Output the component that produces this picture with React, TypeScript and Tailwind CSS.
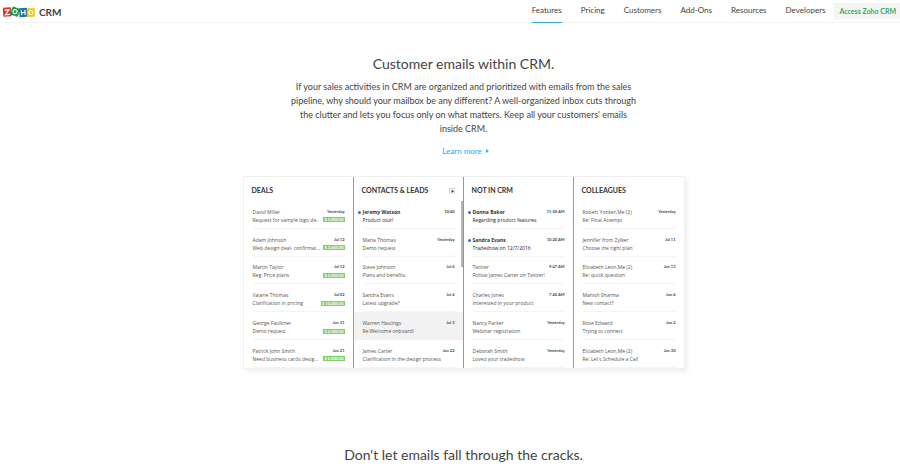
import clsx from "clsx";

type Mail = {
  name: string;
  subject: string;
  date: string;
  amount?: string;
  unread?: boolean;
  active?: boolean;
};

const navItems = ["Features", "Pricing", "Customers", "Add-Ons", "Resources", "Developers"];

const columns: { title: string; mails: Mail[] }[] = [
  {
    title: "DEALS",
    mails: [
      { name: "David Miller", subject: "Request for sample logo de..", date: "Yesterday", amount: "$ 5,000.00" },
      { name: "Adam Johnson", subject: "Web design deal- confirmat...", date: "Jul 12", amount: "$ 3,000.00" },
      { name: "Martin Taylor", subject: "Reg: Price plans", date: "Jul 12", amount: "$ 6,000.00" },
      { name: "Valarie Thomas", subject: "Clarification in pricing", date: "Jul 02", amount: "$ 10,000.00" },
      { name: "George Faulkner", subject: "Demo request", date: "Jun 31", amount: "$ 4,000.00" },
      { name: "Patrick John Smith", subject: "Need business cards desig...", date: "Jun 21", amount: "$ 6,000.00" },
    ],
  },
  {
    title: "CONTACTS & LEADS",
    mails: [
      { name: "Jeremy Watson", subject: "Product tour!", date: "10:40", unread: true },
      { name: "Maria Thomas", subject: "Demo request", date: "Yesterday" },
      { name: "Steve Johnson", subject: "Plans and benefits", date: "Jul 6" },
      { name: "Sandra Evans", subject: "Latest upgrade?", date: "Jul 4" },
      { name: "Warren Hastings", subject: "Re:Welcome onboard!", date: "Jul 3", active: true },
      { name: "James Carter", subject: "Clarification in the design process", date: "Jun 22" },
    ],
  },
  {
    title: "NOT IN CRM",
    mails: [
      { name: "Donna Baker", subject: "Regarding product features", date: "11:58 AM", unread: true },
      { name: "Sandra Evans", subject: "Tradeshow on 12/7/2016", date: "10:20 AM", unread: true },
      { name: "Twitter", subject: "Follow James Carter on Twitter!", date: "9:47 AM" },
      { name: "Charles Jones", subject: "Interested in your product", date: "7:40 AM" },
      { name: "Nancy Parker", subject: "Webinar registration", date: "Yesterday" },
      { name: "Deborah Smith", subject: "Loved your tradeshow", date: "Yesterday" },
    ],
  },
  {
    title: "COLLEAGUES",
    mails: [
      { name: "Robert Yonker,Me (2)", subject: "Re: Final Attempt", date: "Yesterday" },
      { name: "Jennifer from Zylker", subject: "Choose the right plan", date: "Jul 11" },
      { name: "Elizabeth Leon,Me (2)", subject: "Re: quick question", date: "Jun 13" },
      { name: "Manish Sharma", subject: "New contact?", date: "Jun 6" },
      { name: "Rose Edward", subject: "Trying to connect", date: "Jun 2" },
      { name: "Elizabeth Leon,Me (2)", subject: "Re: Let's Schedule a Call", date: "Jun 30" },
    ],
  },
];

function Logo() {
  return (
    <svg viewBox="0 0 32 12" className="h-3 w-8" aria-hidden="true">
      <g transform="rotate(-5 4 6)">
        <rect x="0" y="1.5" width="8.4" height="9" rx="0.6" fill="#e0352b" />
        <path d="M2 4h4.2L2.2 8.6h4.4" fill="none" stroke="#fff" strokeWidth="1.2" />
      </g>
      <g transform="rotate(20 12 5)">
        <rect x="8.4" y="1.4" width="8" height="8.4" rx="0.6" fill="#159b4a" />
        <circle cx="12.3" cy="5.6" r="2" fill="none" stroke="#fff" strokeWidth="1.1" />
      </g>
      <g transform="rotate(-4 20 6)">
        <rect x="16.2" y="2" width="8" height="9" rx="0.6" fill="#1673b9" />
        <path d="M18.4 4.2v4.8M22 4.2v4.8M18.4 6.6H22" fill="none" stroke="#fff" strokeWidth="1.2" />
      </g>
      <rect x="23.8" y="2.2" width="8" height="8.6" rx="0.6" fill="#f5c400" />
      <circle cx="27.8" cy="6.5" r="2" fill="none" stroke="#fff" strokeWidth="1.1" />
    </svg>
  );
}

function PopoutIcon() {
  return (
    <svg viewBox="0 0 6 6" className="size-[6px]" fill="none" stroke="#aaa" strokeWidth="0.5" aria-hidden="true">
      <path d="M2 5.5H.5V.5h5v5H4.6" />
      <path d="M2.6 2.2l2 1.2-1 .3-.5 1z" fill="#222" stroke="#333" />
    </svg>
  );
}

function MailRow({ mail }: { mail: Mail }) {
  return (
    <li className={clsx("relative flex-1 pr-2 pl-[9px]", mail.active && "bg-[#f2f2f2]")}>
      {mail.unread && <span className="absolute top-[10px] left-1 size-[3px] rounded-full bg-[#1f6fe5]" />}
      <div className="flex h-full flex-col justify-end border-b border-[#f4f4f4] pb-1">
        <div className="flex justify-between">
          <span className={clsx("text-[5px] leading-2", mail.unread ? "font-bold text-[#333]" : "text-[#555]")}>
            {mail.name}
          </span>
          <time className="font-['Lato'] text-[4px] leading-[7px] font-bold text-[#444]">{mail.date}</time>
        </div>
        <div className="flex items-center justify-between">
          <span className={clsx("text-[5px] leading-2 whitespace-nowrap", mail.unread ? "text-[#222]" : "text-[#555]")}>
            {mail.subject}
          </span>
          {mail.amount && (
            <span className="bg-[#7ed067] px-px font-['Lato'] text-[4px] leading-[5px] font-bold whitespace-nowrap text-white">
              {mail.amount}
            </span>
          )}
        </div>
      </div>
    </li>
  );
}

export default function App() {
  return (
    <div className="min-h-screen bg-white font-['Lato','Liberation_Sans',sans-serif] text-[#444]">
      <header className="flex h-[23px] items-start justify-between border-b border-[#f3f3f3] pl-[3px]">
        <a href="#home" className="flex h-6 items-center gap-1">
          <Logo />
          <span className="text-[10px] font-bold text-[#444]">CRM</span>
        </a>
        <nav className="flex items-start gap-[19px]">
          {navItems.map((item, i) => (
            <a
              key={item}
              href={`#${item.toLowerCase()}`}
              className={clsx("h-[23px] text-[8px] leading-5", i === 0 && "border-b border-[#2cb0e4]")}
            >
              {item}
            </a>
          ))}
          <a
            href="#access"
            className="-ml-[10px] mt-[3px] bg-[#f5f5f5] pr-1 pl-[5px] text-[7px] leading-4 font-bold text-[#35a85a]"
          >
            Access Zoho CRM
          </a>
        </nav>
      </header>

      <main className="pt-8 pl-[27px] text-center">
        <section>
          <h2 className="text-[14px] leading-[18px]">Customer emails within CRM.</h2>
          <p className="mx-auto mt-[7px] max-w-[350px] text-[9px] leading-[14px]">
            If your sales activities in CRM are organized and prioritized with emails from the sales pipeline, why
            should your mailbox be any different? A well-organized inbox cuts through the clutter and lets you focus
            only on what matters. Keep all your customers' emails inside CRM.
          </p>
          <a
            href="#learn"
            className="mt-2 inline-flex items-center gap-1 pl-1 text-[8px] leading-[14px] font-medium text-[#2db2f4]"
          >
            Learn more
            <svg viewBox="0 0 3 4" className="h-1 w-[3px]" fill="currentColor" aria-hidden="true">
              <path d="M0 0l3 2-3 2z" />
            </svg>
          </a>

          <div className="mx-auto mt-4 grid max-w-[442px] grid-cols-4 border border-[#f1f1f1] bg-white text-left shadow-[3px_3px_4px_rgba(0,0,0,0.06)]">
            {columns.map((column, i) => (
              <div key={column.title} className={clsx("relative", i < 3 && "border-r border-[#999]")}>
                <div className="flex h-6 items-end justify-between px-2 pb-[7px]">
                  <h3 className="text-[7px] leading-2 font-bold text-[#333]">{column.title}</h3>
                  {i === 1 && (
                    <button type="button" aria-label="Open in new window">
                      <PopoutIcon />
                    </button>
                  )}
                </div>
                <ul className="flex h-[167px] flex-col font-['Open_Sans','Liberation_Sans',sans-serif]">
                  {column.mails.map((mail) => (
                    <MailRow key={mail.name + mail.subject} mail={mail} />
                  ))}
                </ul>
                {i === 1 && <span className="absolute top-6 right-0 h-[66px] w-[2px] bg-[#b5b5b5]" />}
              </div>
            ))}
          </div>
        </section>

        <section className="pt-[77px]">
          <h2 className="text-[14px] leading-[18px]">Don't let emails fall through the cracks.</h2>
        </section>
      </main>
    </div>
  );
}
